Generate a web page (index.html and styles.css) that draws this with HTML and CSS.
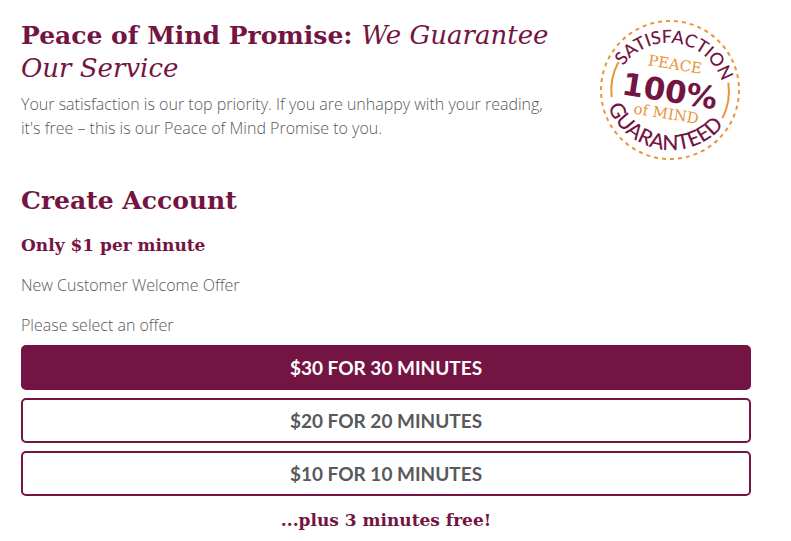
FILE: index.html
```html
<!DOCTYPE html>
<html lang="en">
<head>
    <meta charset="UTF-8">
    <meta name="viewport" content="width=device-width, initial-scale=1.0">
    <title>Create Account</title>
    <link rel="stylesheet" href="styles.css">
</head>
<body>
    <main class="page">
        <section class="promise">
            <div class="promise-text">
                <h2>Peace of Mind Promise: <em>We Guarantee Our Service</em></h2>
                <p>Your satisfaction is our top priority. If you are unhappy with your reading, it's free – this is our Peace of Mind Promise to you.</p>
            </div>
            <svg class="seal" viewBox="0 0 142 142" role="img" aria-label="Satisfaction guaranteed">
                <defs>
                    <path id="arc-top" d="M15 80 A56 56 0 0 1 127 80"/>
                    <path id="arc-bottom" d="M3 63 A68 68 0 0 0 139 63"/>
                </defs>
                <circle class="seal-ring" cx="71" cy="71" r="69" pathLength="432"/>
                <path class="seal-side" d="M19.5 43 A59 59 0 0 0 12.7 78"/>
                <path class="seal-side" d="M129.3 63.7 A59 59 0 0 1 123.5 99"/>
                <g transform="rotate(9 71 71)">
                    <text class="seal-curve"><textPath href="#arc-top" startOffset="50%">SATISFACTION</textPath></text>
                    <text class="seal-curve seal-lower"><textPath href="#arc-bottom" startOffset="50%">GUARANTEED</textPath></text>
                    <text class="seal-small" x="72" y="50">PEACE</text>
                    <text class="seal-big" x="71" y="83">100%</text>
                    <text class="seal-small" x="71" y="100">of MIND</text>
                </g>
            </svg>
        </section>

        <form class="account">
            <h2>Create Account</h2>
            <h3>Only $1 per minute</h3>
            <p>New Customer Welcome Offer</p>
            <p id="offer-label">Please select an offer</p>
            <div class="offers" role="group" aria-labelledby="offer-label">
                <button type="button" class="offer active">$30 FOR 30 MINUTES</button>
                <button type="button" class="offer">$20 FOR 20 MINUTES</button>
                <button type="button" class="offer">$10 FOR 10 MINUTES</button>
            </div>
            <h3 class="bonus">...plus 3 minutes free!</h3>
        </form>
    </main>
</body>
</html>
```
FILE: styles.css
```css
* {
    box-sizing: border-box;
}
body {
    margin: 0;
    background: #fff;
    color: #58595b;
    font-family: "Open Sans", sans-serif;
    font-size: 16px;
    font-weight: 300;
    line-height: 24px;
}
.page {
    padding: 19px 40px 0 21px;
}
h2, h3 {
    margin: 0;
    color: #731442;
    font-family: "DejaVu Serif", serif;
    font-weight: bold;
}
h2 {
    font-size: 25px;
    line-height: 33px;
}
h2 em {
    font-size: 26px;
    font-weight: normal;
}
h3 {
    font-size: 17px;
    line-height: 24px;
}
p {
    margin: 0;
}
.promise {
    display: flex;
    justify-content: space-between;
    align-items: flex-start;
    padding-right: 10px;
}
.promise-text {
    flex: 0 1 536px;
}
.promise-text p {
    margin-top: 7px;
}
.seal {
    flex: none;
    width: 142px;
    height: 142px;
    overflow: visible;
}
.seal-ring {
    fill: none;
    stroke: #e8963a;
    stroke-width: 2;
    stroke-dasharray: 4 4;
}
.seal-side {
    fill: none;
    stroke: #e8963a;
    stroke-width: 2;
}
.seal text {
    text-anchor: middle;
}
.seal-curve {
    fill: #731442;
    font-family: Lato, sans-serif;
    font-size: 18px;
    font-weight: 500;
}
.seal-lower {
    font-size: 21px;
}
.seal-small {
    fill: #e8963a;
    font-family: "DejaVu Serif", serif;
    font-size: 15px;
}
.seal-big {
    fill: #731442;
    font-family: "DejaVu Sans", sans-serif;
    font-size: 31px;
    font-weight: bold;
}
.account {
    margin-top: 23px;
}
.account h3 {
    margin-top: 16px;
}
.account p {
    margin-top: 16px;
}
.offers {
    display: flex;
    flex-direction: column;
    gap: 8px;
    margin-top: 8px;
}
.offer {
    height: 45px;
    padding: 0;
    border: 2px solid #731442;
    border-radius: 5px;
    background: #fff;
    color: #58595b;
    font-family: Lato, sans-serif;
    font-size: 19px;
    font-weight: bold;
    cursor: pointer;
}
.offer.active {
    background: #731442;
    color: #fff;
}
.account .bonus {
    margin-top: 12px;
    text-align: center;
}
```
